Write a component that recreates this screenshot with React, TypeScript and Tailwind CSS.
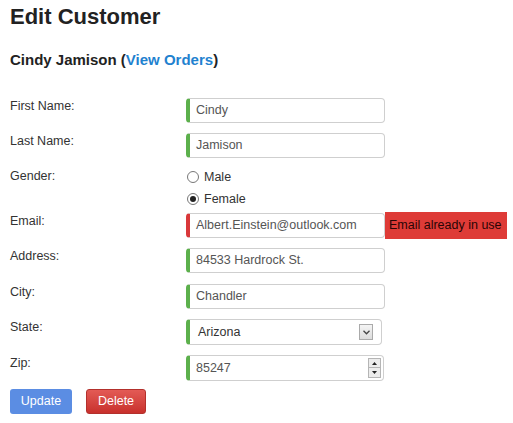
import React from "react";

const font = { fontFamily: '"Liberation Sans", Arial, sans-serif' };

function Field({ value, invalid = false }: { value: string; invalid?: boolean }) {
  return (
    <div
      className={`flex h-[25px] w-[199px] items-center rounded-[4px] border border-[#cfcfcf] border-l-4 bg-white pl-[6px] text-[12.5px] text-[#555] ${
        invalid ? "border-l-[#d9383a]" : "border-l-[#5cb04c]"
      }`}
    >
      {value}
    </div>
  );
}

function Row({ label, children, className = "" }: { label: string; children: React.ReactNode; className?: string }) {
  return (
    <div className={`flex ${className}`}>
      <div className="w-[176px] pt-[1px] text-[12.5px] leading-[15px] text-[#333]">{label}</div>
      {children}
    </div>
  );
}

function Radio({ label, checked = false }: { label: string; checked?: boolean }) {
  return (
    <div className="flex h-[18px] items-center">
      <span className="ml-[1px] flex h-[12px] w-[12px] items-center justify-center rounded-full border border-[#777] bg-white">
        {checked && <span className="h-[6px] w-[6px] rounded-full bg-[#222]" />}
      </span>
      <span className="ml-[5px] text-[12.5px] text-[#333]">{label}</span>
    </div>
  );
}

export default function App() {
  return (
    <div className="h-[423px] w-[513px] overflow-hidden bg-white pl-[10px]" style={font}>
      <h1 className="pt-[4px] text-[22px] font-bold leading-[26px] text-[#222]">Edit Customer</h1>
      <h2 className="mt-[21px] text-[15px] font-bold leading-[18px] text-[#222]">
        Cindy Jamison (<span className="text-[#1f82cf]">View Orders</span>)
      </h2>

      <div className="mt-[29px]">
        <Row label="First Name:">
          <Field value="Cindy" />
        </Row>
        <Row label="Last Name:" className="mt-[10px]">
          <Field value="Jamison" />
        </Row>
        <Row label="Gender:" className="mt-[10px]">
          <div className="flex flex-col gap-[4px]">
            <Radio label="Male" />
            <Radio label="Female" checked />
          </div>
        </Row>
        <Row label="Email:" className="mt-[5px]">
          <div className="flex h-[25px] items-center">
            <Field value="Albert.Einstein@outlook.com" invalid />
            <div className="flex h-[27px] w-[122px] shrink-0 items-center bg-[#de3b37] pl-[4px] text-[12.5px] text-[#2a0505]">
              Email already in use
            </div>
          </div>
        </Row>
        <Row label="Address:" className="mt-[10px]">
          <Field value="84533 Hardrock St." />
        </Row>
        <Row label="City:" className="mt-[11px]">
          <Field value="Chandler" />
        </Row>
        <Row label="State:" className="mt-[10px]">
          <div className="flex h-[26px] w-[196px] items-center justify-between rounded-[4px] border border-[#cfcfcf] border-l-4 border-l-[#5cb04c] bg-white pl-[8px] pr-[8px] text-[12.5px] text-[#333]">
            <span>Arizona</span>
            <span className="flex h-[16px] w-[14px] items-center justify-center border border-[#aaa] bg-gradient-to-b from-[#f4f4f4] to-[#dcdcdc]">
              <svg width="7" height="5" viewBox="0 0 7 5">
                <path d="M0.5 0.8 L3.5 3.8 L6.5 0.8" fill="none" stroke="#444" strokeWidth="1.3" />
              </svg>
            </span>
          </div>
        </Row>
        <Row label="Zip:" className="mt-[10px]">
          <div className="flex h-[26px] w-[198px] items-center justify-between rounded-[4px] border border-[#cfcfcf] border-l-4 border-l-[#5cb04c] bg-white pl-[6px] pr-[2px] text-[12.5px] text-[#555]">
            <span>85247</span>
            <span className="flex h-[20px] w-[13px] flex-col">
              <span className="flex h-[10px] items-center justify-center border border-[#b5b5b5] bg-[#ececec]">
                <svg width="5" height="3" viewBox="0 0 5 3">
                  <path d="M0 3 L2.5 0 L5 3 Z" fill="#222" />
                </svg>
              </span>
              <span className="flex h-[10px] items-center justify-center border border-t-0 border-[#b5b5b5] bg-[#ececec]">
                <svg width="5" height="3" viewBox="0 0 5 3">
                  <path d="M0 0 L2.5 3 L5 0 Z" fill="#222" />
                </svg>
              </span>
            </span>
          </div>
        </Row>

        <div className="mt-[8px] flex gap-[14px]">
          <button className="h-[25px] w-[62px] rounded-[3px] bg-[#5b8de3] text-[12.5px] text-white">Update</button>
          <button className="h-[25px] w-[60px] rounded-[3px] border border-[#b3302c] bg-gradient-to-b from-[#e35a55] to-[#c8302c] text-[12.5px] text-white">
            Delete
          </button>
        </div>
      </div>
    </div>
  );
}
